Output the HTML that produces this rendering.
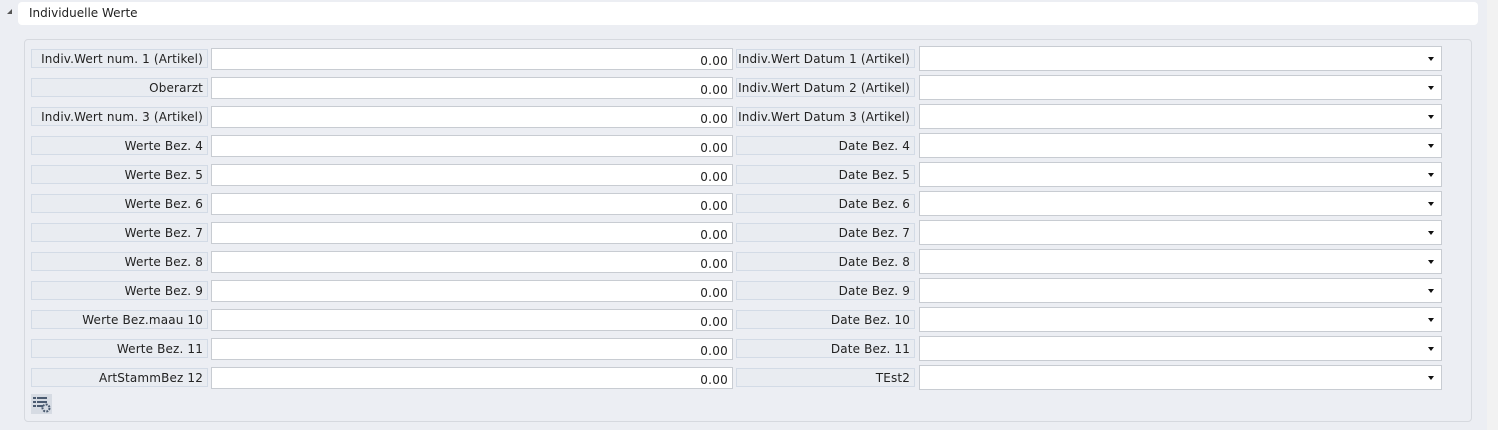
<!DOCTYPE html>
<html><head><style>
body{margin:0;width:1498px;height:430px;background:#eceef3;font-family:"DejaVu Sans","Liberation Sans",sans-serif;font-size:12px;color:#222;position:relative;overflow:hidden}
.side{position:absolute;left:1487px;top:0;width:11px;height:430px;background:#f2f2f2}
.hdr{position:absolute;left:18px;top:2px;width:1460px;height:23px;background:#fff;border-radius:4px}
.hdr span{position:absolute;left:11px;top:4px}
.tri{position:absolute;left:7px;top:9px;width:0;height:0;border-left:5px solid transparent;border-bottom:5px solid #555}
.panel{position:absolute;left:24px;top:39px;width:1446px;height:381px;border:1px solid #d6d9df;border-radius:4px;background:#eceef3}
.l{position:absolute;height:19px;line-height:19px;background:#e9ecf1;border:1px solid #d3dbe6;text-align:right;padding-right:4px;box-sizing:border-box;letter-spacing:0.15px;white-space:nowrap;overflow:hidden}
.i{position:absolute;height:22px;line-height:22px;background:#fff;border:1px solid #c8ccd2;box-sizing:border-box;text-align:right;padding-right:4px;padding-top:1px;letter-spacing:0.25px}
.s{position:absolute;height:25px;background:#fff;border:1px solid #c8ccd2;box-sizing:border-box}
.s:after{content:"";position:absolute;right:7px;top:10px;border-left:3.5px solid transparent;border-right:3.5px solid transparent;border-top:4px solid #111}
.ic{position:absolute;left:31px;top:394px;width:21px;height:20px;background:#d6dbe3}
</style></head><body>
<div class="side"></div>
<div class="tri"></div>
<div class="hdr"><span>Individuelle Werte</span></div>
<div class="panel"></div>
<div id="rows"></div>
<div class="ic"><svg width="21" height="20" viewBox="0 0 21 20"><g fill="#4a5a70"><rect x="2" y="3" width="3" height="2"/><rect x="6" y="3" width="10" height="2"/><rect x="2" y="7" width="3" height="2"/><rect x="6" y="7" width="10" height="2"/><rect x="2" y="11" width="3" height="2"/><rect x="6" y="11" width="6" height="2"/></g><circle cx="15" cy="14" r="3.5" fill="none" stroke="#4a5a70" stroke-width="2" stroke-dasharray="2 1.2"/></svg></div>
<script>
var L=["Indiv.Wert num. 1 (Artikel)","Oberarzt","Indiv.Wert num. 3 (Artikel)","Werte Bez. 4","Werte Bez. 5","Werte Bez. 6","Werte Bez. 7","Werte Bez. 8","Werte Bez. 9","Werte Bez.maau 10","Werte Bez. 11","ArtStammBez 12"];
var R=["Indiv.Wert Datum 1 (Artikel)","Indiv.Wert Datum 2 (Artikel)","Indiv.Wert Datum 3 (Artikel)","Date Bez. 4","Date Bez. 5","Date Bez. 6","Date Bez. 7","Date Bez. 8","Date Bez. 9","Date Bez. 10","Date Bez. 11","TEst2"];
var h="";
for(var k=0;k<12;k++){var y=49+k*29;
h+='<div class="l" style="left:31px;top:'+y+'px;width:177px">'+L[k]+'</div>';
h+='<div class="i" style="left:211px;top:'+(y-1)+'px;width:522px">0.00</div>';
h+='<div class="l" style="left:736px;top:'+y+'px;width:179px">'+R[k]+'</div>';
h+='<div class="s" style="left:919px;top:'+(y-3)+'px;width:523px"></div>';}
document.getElementById("rows").innerHTML=h;
</script>
</body></html>
